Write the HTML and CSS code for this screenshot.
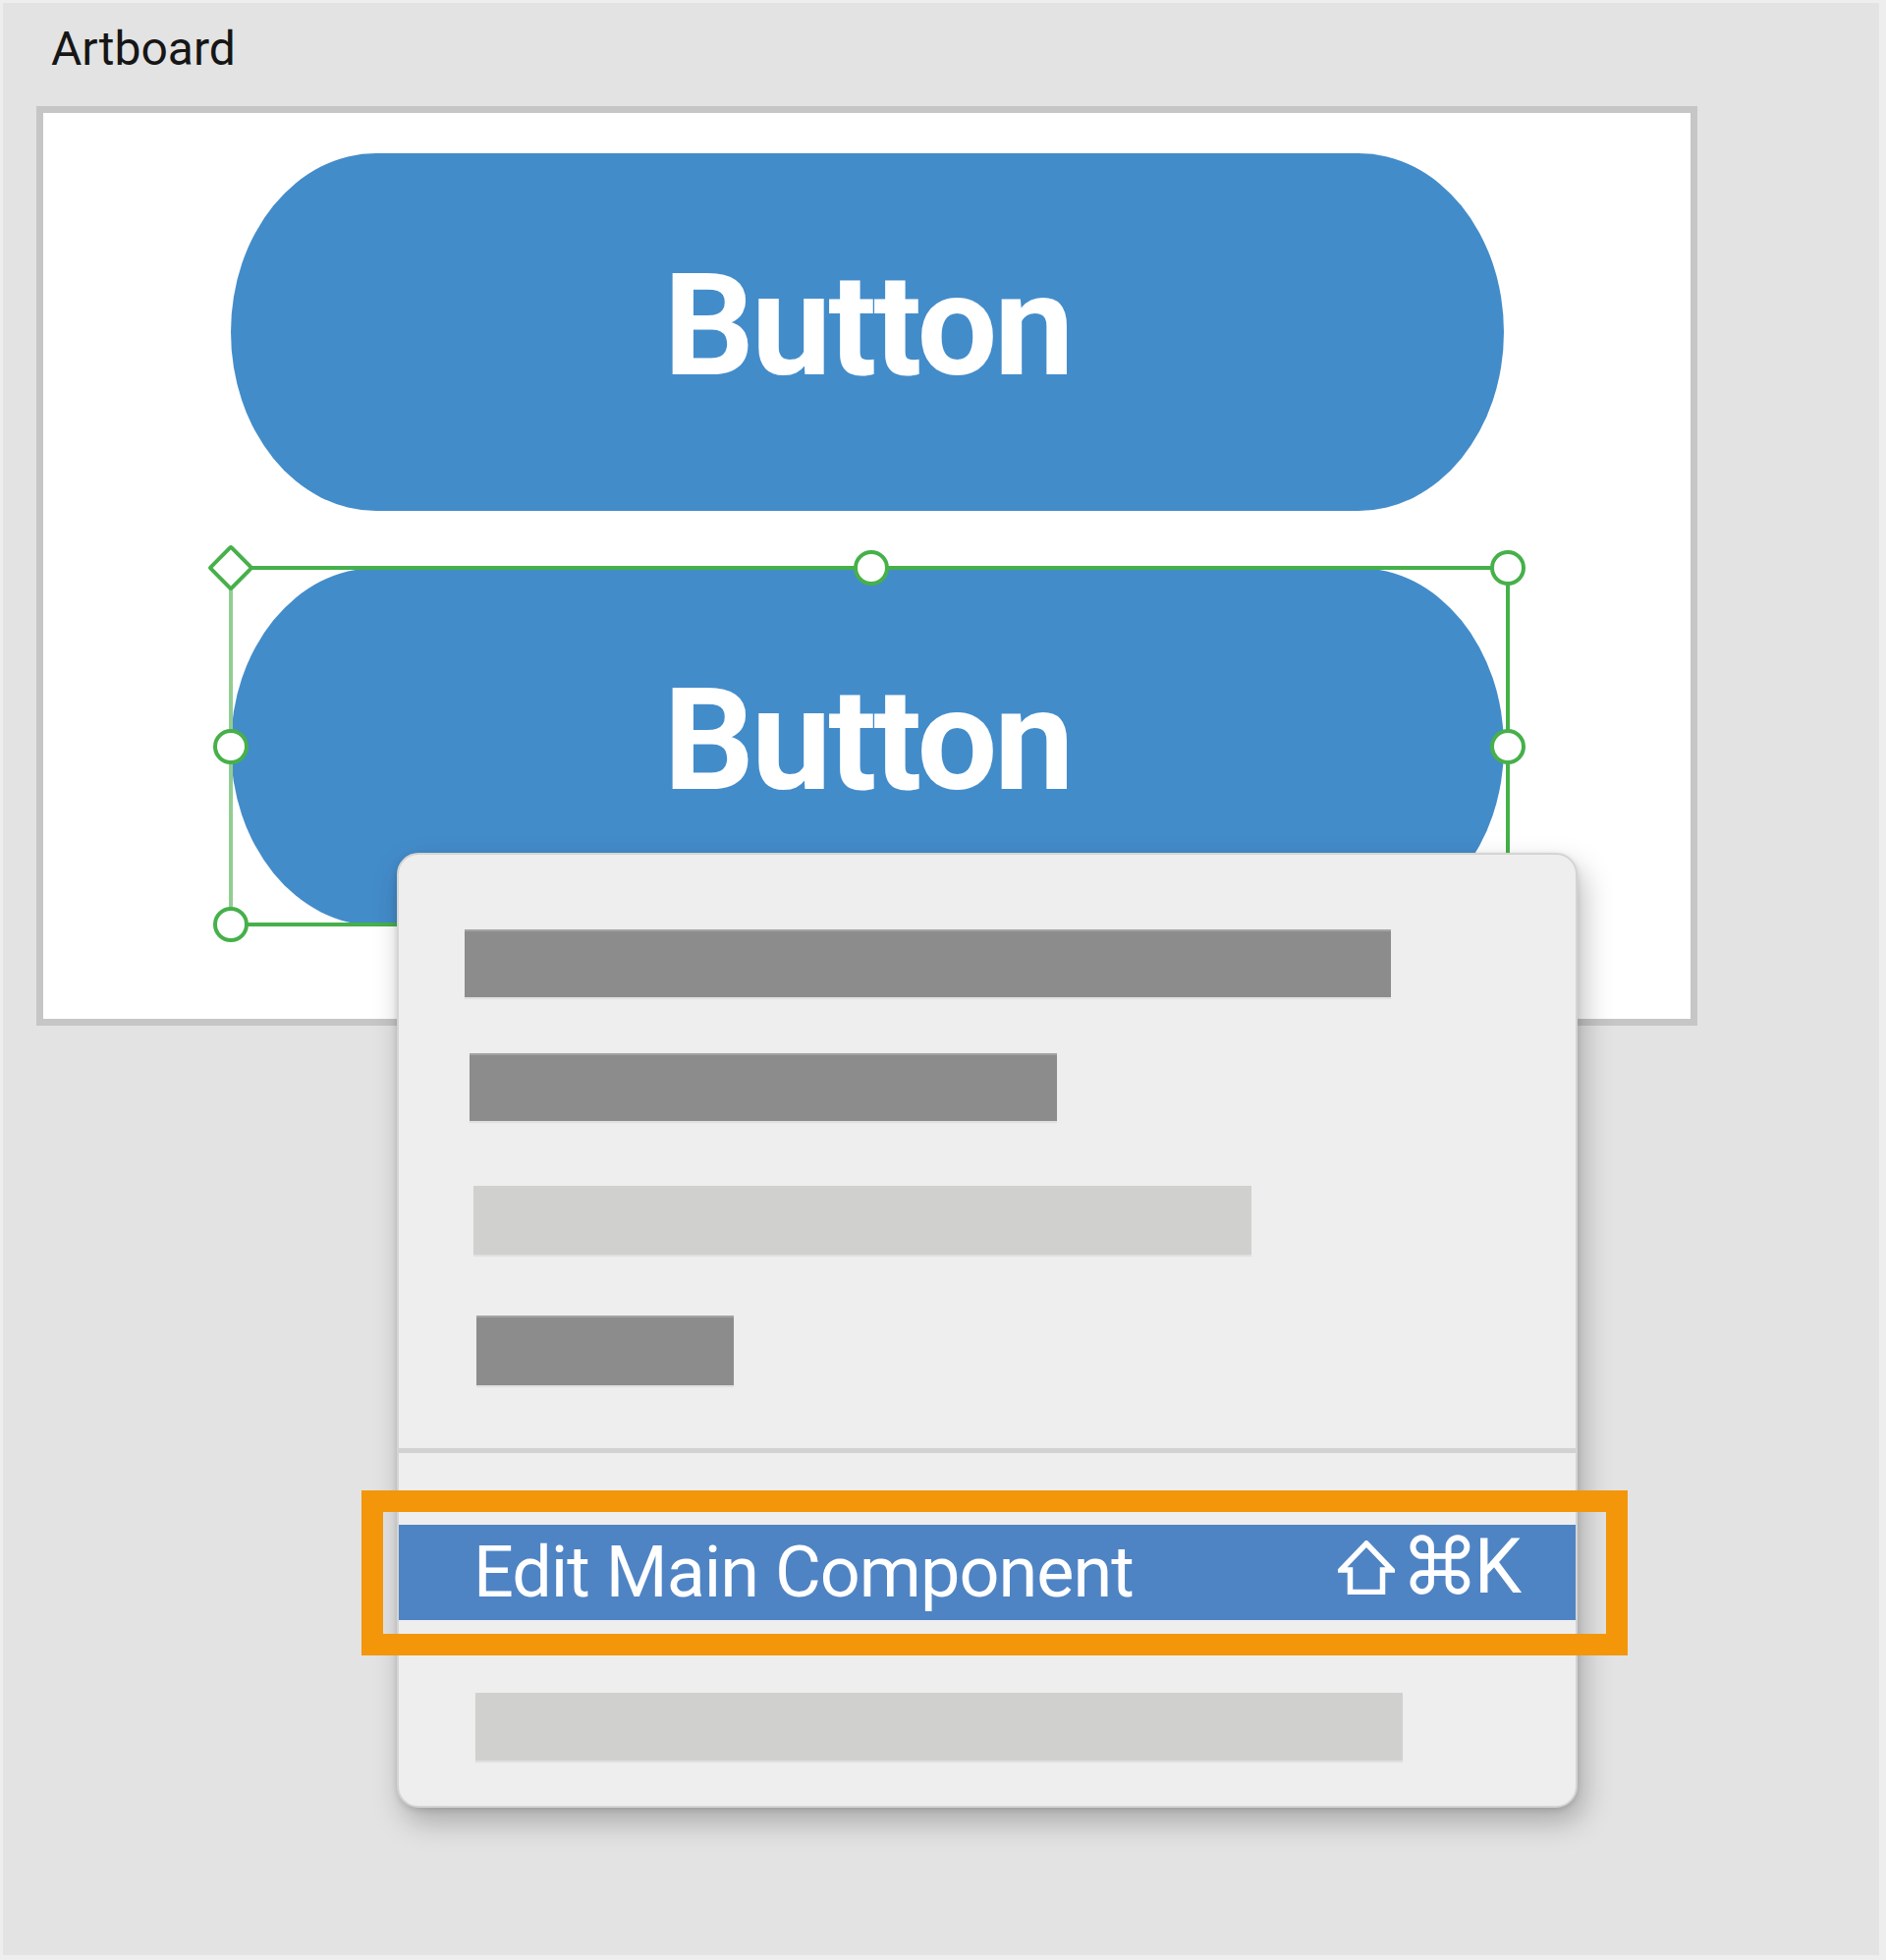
FILE: index.html
```html
<!DOCTYPE html>
<html lang="en">
<head>
<meta charset="utf-8">
<title>Edit Main Component</title>
<link rel="stylesheet" href="styles.css">
</head>
<body>
<div class="page">
  <div class="label">Artboard</div>
  <div class="artboard">
    <div class="btn">Button</div>
    <div class="selected">
      <div class="btn">Button</div>
      <div class="selection">
        <span class="handle diamond h-tl"></span>
        <span class="handle h-tc"></span>
        <span class="handle h-tr"></span>
        <span class="handle h-ml"></span>
        <span class="handle h-mr"></span>
        <span class="handle h-bl"></span>
        <span class="handle h-bc"></span>
        <span class="handle h-br"></span>
      </div>
    </div>
  </div>
  <div class="menu">
    <div class="bar dark bar-1"></div>
    <div class="bar dark bar-2"></div>
    <div class="bar light bar-3"></div>
    <div class="bar dark bar-4"></div>
    <div class="separator"></div>
    <div class="highlight">
      <span class="item-label">Edit Main Component</span>
      <span class="shortcut">
        <svg class="shift" width="58" height="55" viewBox="0 0 58 55" aria-label="Shift"><path d="M29 3 L55 30 H45.5 V52.5 H12.5 V30 H3 Z" fill="none" stroke="#ffffff" stroke-width="5.5" stroke-linejoin="miter"/></svg>
        <span class="cmd">⌘</span><span class="key">K</span>
      </span>
      <div class="callout"></div>
    </div>
    <div class="bar light bar-5"></div>
  </div>
</div>
</body>
</html>
```
FILE: styles.css
```css
html, body {
  margin: 0;
  padding: 0;
}
body {
  background: #e3e3e3;
}
.page {
  position: relative;
  box-sizing: border-box;
  width: 1920px;
  height: 1995px;
  background: #e3e3e3;
  border-style: solid;
  border-color: #eeeeee;
  border-width: 3px 7px 5px 3px;
  padding: 23px 0 0 34px;
  overflow: hidden;
}
.label {
  margin-left: 15px;
  font-family: Roboto, "Liberation Sans", sans-serif;
  font-size: 48px;
  line-height: 48px;
  color: #161616;
}
.artboard {
  box-sizing: border-box;
  margin-top: 34px;
  width: 1691px;
  height: 936px;
  background: #ffffff;
  border: 7px solid #c6c6c6;
  padding: 41px 0 0 191px;
}
.btn {
  box-sizing: border-box;
  width: 1296px;
  height: 364px;
  background: #438cca;
  border-radius: 148px / 182px;
  display: flex;
  justify-content: center;
  align-items: flex-start;
  padding-top: 103px;
  color: #ffffff;
  font-family: Roboto, "Liberation Sans", sans-serif;
  font-weight: 700;
  font-size: 145px;
  line-height: 145px;
  letter-spacing: -3px;
}
.selected {
  position: relative;
  margin-top: 58px;
}
.selection {
  position: absolute;
  left: -2px;
  top: -2px;
  width: 1304px;
  height: 367px;
  box-sizing: border-box;
  border: 4px solid #46b04a;
  border-left-color: #93cd93;
}
.handle {
  position: absolute;
  width: 36px;
  height: 36px;
  box-sizing: border-box;
  border: 4px solid #46b04a;
  background: #ffffff;
  border-radius: 50%;
  transform: translate(-50%, -50%);
}
.handle.diamond {
  width: 34px;
  height: 34px;
  border-radius: 3px;
  transform: translate(-50%, -50%) rotate(45deg);
}
.h-tl { left: -2px; top: -2px; }
.h-tc { left: 650px; top: -2px; }
.h-tr { left: 1298px; top: -2px; }
.h-ml { left: -2px; top: 180px; }
.h-mr { left: 1298px; top: 180px; }
.h-bl { left: -2px; top: 361px; }
.h-bc { left: 650px; top: 361px; }
.h-br { left: 1298px; top: 361px; }

.menu {
  position: absolute;
  left: 401px;
  top: 865px;
  width: 1202px;
  height: 972px;
  box-sizing: border-box;
  background: #eeeeee;
  border: 2px solid #d4d4d4;
  border-radius: 22px;
  box-shadow: 6px 14px 30px rgba(0, 0, 0, 0.26), 0 2px 6px rgba(0, 0, 0, 0.12);
  display: flex;
  flex-direction: column;
  align-items: flex-start;
}
.bar {
  box-shadow: 0 2px 1px rgba(0, 0, 0, 0.06);
}
.bar.dark {
  background: #8c8c8c;
  border-top: 2px solid #a3a3a3;
  box-sizing: border-box;
}
.bar.light {
  background: #d0d0ce;
}
.bar-1 { margin-top: 76px; margin-left: 67px; width: 943px; height: 69px; }
.bar-2 { margin-top: 57px; margin-left: 72px; width: 598px; height: 69px; }
.bar-3 { margin-top: 66px; margin-left: 76px; width: 792px; height: 70px; }
.bar-4 { margin-top: 62px; margin-left: 79px; width: 262px; height: 71px; }
.bar-5 { margin-top: 74px; margin-left: 78px; width: 944px; height: 69px; }
.separator {
  align-self: stretch;
  margin-top: 64px;
  height: 5px;
  background: #d2d2d2;
}
.highlight {
  position: relative;
  align-self: stretch;
  box-sizing: border-box;
  margin-top: 73px;
  height: 97px;
  background: #4f84c4;
  display: flex;
  justify-content: space-between;
  align-items: flex-start;
  padding: 0 55px 0 76px;
  color: #ffffff;
}
.item-label {
  margin-top: 13px;
  font-family: Roboto, "Liberation Sans", sans-serif;
  font-size: 72px;
  line-height: 72px;
  letter-spacing: -1px;
}
.shortcut {
  height: 87px;
  display: flex;
  align-items: center;
}
.shift {
  display: block;
  flex: none;
}
.cmd {
  margin-left: 6px;
  font-family: "DejaVu Sans", sans-serif;
  font-size: 80px;
  line-height: 80px;
  letter-spacing: -6px;
}
.key {
  margin-left: 1px;
  font-family: Roboto, "Liberation Sans", sans-serif;
  font-weight: 400;
  font-size: 77px;
  line-height: 77px;
}
.callout {
  position: absolute;
  left: -38px;
  top: -35px;
  width: 1289px;
  height: 168px;
  box-sizing: border-box;
  border: 22px solid #f39609;
}
```
